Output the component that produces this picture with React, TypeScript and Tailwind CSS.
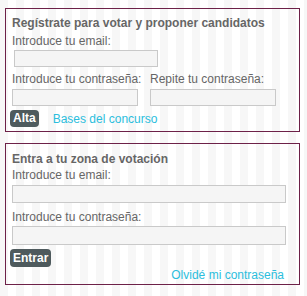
import React from "react";

const font = { fontFamily: '"Liberation Sans", Arial, sans-serif' };

function Input({ className = "" }: { className?: string }) {
  return (
    <input
      type="text"
      className={`block h-[17px] border border-[#c9c9c9] bg-[#f5f5f5] outline-none ${className}`}
    />
  );
}

export default function App() {
  return (
    <div
      style={font}
      className="w-[307px] h-[296px] overflow-hidden pl-[5px] pt-[8px] bg-[repeating-linear-gradient(90deg,#f7f7f7_0px,#f7f7f7_8px,#ffffff_8px,#ffffff_16px)]"
    >
      {/* Panel 1 */}
      <div className="w-[295px] border border-[#6d2148] px-[4px] pt-[6px] pb-[4px]">
        <h2 className="ml-[2px] text-[12px] leading-[16px] font-bold text-[#666]">
          Regístrate para votar y proponer candidatos
        </h2>
        <label className="block ml-[2px] mt-[2px] text-[12px] leading-[16px] text-[#666]">
          Introduce tu email:
        </label>
        <Input className="ml-[4px] mt-[1px] w-[144px]" />
        <div className="mt-[4px] flex ml-[2px]">
          <div className="flex flex-col w-[138px]">
            <label className="text-[12px] leading-[16px] text-[#666] whitespace-nowrap">
              Introduce tu contraseña:
            </label>
            <Input className="mt-[2px] w-[126px]" />
          </div>
          <div className="flex flex-col">
            <label className="text-[12px] leading-[16px] text-[#666] whitespace-nowrap">
              Repite tu contraseña:
            </label>
            <Input className="mt-[2px] w-[126px]" />
          </div>
        </div>
        <div className="mt-[4px] flex items-center">
          <button className="h-[17px] px-[3px] rounded-[4px] bg-[#4e5a5d] text-white text-[12px] leading-[17px] font-bold">
            Alta
          </button>
          <a className="ml-[14px] text-[12px] leading-[16px] text-[#2bbedd]">
            Bases del concurso
          </a>
        </div>
      </div>

      {/* Panel 2 */}
      <div className="mt-[11px] w-[295px] border border-[#6d2148] px-[4px] pt-[7px] pb-[1px]">
        <h2 className="ml-[2px] text-[12px] leading-[16px] font-bold text-[#666]">
          Entra a tu zona de votación
        </h2>
        <label className="block ml-[2px] text-[12px] leading-[16px] text-[#666]">
          Introduce tu email:
        </label>
        <Input className="ml-[2px] mt-[2px] w-[274px] h-[18px]" />
        <label className="block ml-[2px] mt-[6px] text-[12px] leading-[16px] text-[#666]">
          Introduce tu contraseña:
        </label>
        <Input className="ml-[2px] mt-[1px] w-[274px] h-[19px]" />
        <button className="mt-[4px] block h-[18px] px-[3px] rounded-[4px] bg-[#4e5a5d] text-white text-[12px] leading-[18px] font-bold">
          Entrar
        </button>
        <div className="flex justify-end pr-[11px]">
          <a className="text-[12px] leading-[16px] text-[#2bbedd]">
            Olvidé mi contraseña
          </a>
        </div>
      </div>
    </div>
  );
}
